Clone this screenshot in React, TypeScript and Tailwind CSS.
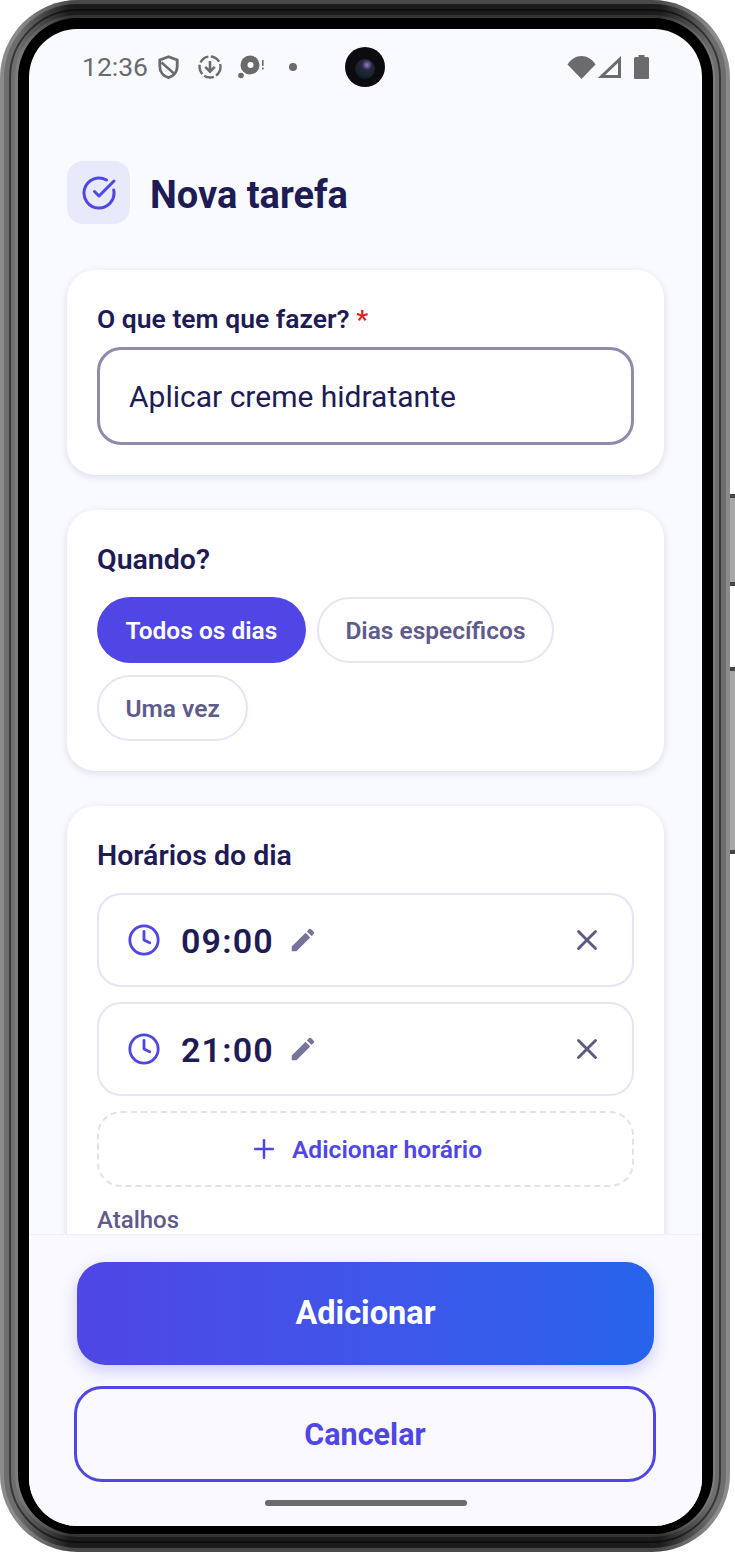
import { CircleCheckBig, Clock, Plus, X } from 'lucide-react';
import { MdEdit } from 'react-icons/md';

function TimeRow({ time }: { time: string }) {
  return (
    <div className="flex items-center h-[94px] rounded-[24px] border-2 border-[#e6e4f5] bg-white pl-[28px] pr-[28px]">
      <Clock size={34} strokeWidth={2} className="text-[#4f46e5] shrink-0" />
      <span className="ml-[20px] pt-[2px] text-[34px] font-semibold tracking-[1.2px] text-[#1e1b55]">{time}</span>
      <MdEdit size={30} className="ml-[14px] text-[#77749a]" />
      <X size={34} strokeWidth={2} className="ml-auto text-[#5d5a80]" />
    </div>
  );
}

function StatusIcons() {
  return (
    <div className="flex items-center text-[#6b6b6e]">
      <span className="text-[26.5px] leading-none">12:36</span>
      <svg width="21" height="25" viewBox="0 0 21 25" fill="none" stroke="currentColor" strokeWidth="2.8" className="ml-[10px]">
        <path d="M10.500 1.800L1.800 5v6.500c0 5.500 3.700 9.700 8.700 11.200 5-1.500 8.700-5.700 8.700-11.200V5z" />
        <path d="M3.500 7.500l12.500 11" strokeWidth="2.400" />
      </svg>
      <svg width="24" height="24" viewBox="0 0 24 24" fill="none" stroke="currentColor" strokeWidth="2.400" className="ml-[19px]">
        <circle cx="12" cy="12" r="10.500" strokeDasharray="10 2.500" />
        <path d="M12 6v10.500M7.200 11.800l4.800 4.800 4.800-4.800" strokeWidth="2.600" />
      </svg>
      <svg width="26" height="24" viewBox="0 0 26 24" className="ml-[16px]">
        <circle cx="12" cy="10" r="9.500" fill="currentColor" />
        <circle cx="12.500" cy="10" r="3" fill="#f8fafe" />
        <circle cx="3" cy="20.500" r="2.800" fill="currentColor" />
        <rect x="24" y="5" width="1.600" height="6" fill="currentColor" />
        <rect x="24" y="12.500" width="1.600" height="2" fill="currentColor" />
      </svg>
      <div className="ml-[25px] w-[8px] h-[8px] rounded-full bg-[#6b6b6e]" />
    </div>
  );
}

function StatusRight() {
  return (
    <div className="flex items-center text-[#6b6b6e]">
      <svg width="29" height="24" viewBox="0 0 29 24" fill="currentColor">
        <path d="M14.500 24L0.500 9.500C4 4 9 1 14.500 1S25 4 28.500 9.500z" />
      </svg>
      <svg width="24" height="24" viewBox="0 0 24 24" fill="none" stroke="currentColor" strokeWidth="3" className="ml-[2px]">
        <path d="M21.500 4.500v17H3.500z" />
      </svg>
      <svg width="15" height="24" viewBox="0 0 15 24" fill="currentColor" className="ml-[12px]">
        <path d="M4.500 0h6v2h3a1.500 1.500 0 0 1 1.500 1.500V23a1 1 0 0 1-1 1H1a1 1 0 0 1-1-1V3.500A1.500 1.500 0 0 1 1.500 2h3z" />
      </svg>
    </div>
  );
}

export default function App() {
  return (
    <div className="relative w-[735px] h-[1553px] bg-white overflow-hidden [font-family:Roboto,sans-serif]">
      {/* Side buttons */}
      <div className="absolute left-[730px] top-[494px] w-[5px] h-[92px] bg-[#a8a8a8] border-y-[4px] border-[#444444]" />
      <div className="absolute left-[730px] top-[667px] w-[5px] h-[187px] bg-[#a8a8a8] border-y-[4px] border-[#444444]" />

      {/* Phone frame */}
      <div className="relative w-[730px] h-[1552px] rounded-[78px] bg-[linear-gradient(90deg,#6e6e6e_0,#6e6e6e_18px,#1c1c1c_70px,#1c1c1c_660px,#6e6e6e_712px,#6e6e6e_100%)] pt-[18px] pl-[18px] pr-[17px] pb-[18px]">
        <div className="absolute inset-0 rounded-[78px] border-[4px] border-white/20" />
        <div className="absolute inset-[9px] rounded-[69px] border-[2px] border-black/50" />
        <div className="absolute inset-[15px] rounded-[63px] border-[3px] border-white/10" />

        <div className="relative w-full h-full rounded-[60px] bg-black pt-[11px] pl-[11px] pr-[11px] pb-[8px]">
          {/* Screen */}
          <div className="relative flex flex-col w-full h-full rounded-[48px] bg-[#f8fafe] overflow-hidden">
            {/* Camera */}
            <div className="absolute left-[316px] top-[18px] w-[40px] h-[40px] rounded-full bg-[#0c0c10] flex items-center justify-center">
              <div className="mt-[4px] w-[20px] h-[20px] rounded-full bg-[radial-gradient(circle_at_60%_30%,#8f80c8_0,#2a2540_28%,#15252c_60%,#0c0c10_100%)]" />
            </div>

            <div className="flex items-center justify-between h-[76px] pl-[53px] pr-[53px] shrink-0">
              <StatusIcons />
              <StatusRight />
            </div>

            {/* Scrollable content */}
            <div className="flex-1 min-h-0 overflow-hidden px-[38px] pt-[56px]">
              <div className="flex items-center gap-[20px] h-[63px]">
                <div className="w-[63px] h-[63px] rounded-[16px] bg-[#e8e9fb] flex items-center justify-center">
                  <CircleCheckBig size={36} strokeWidth={2} className="text-[#4f46e5]" />
                </div>
                <h1 className="pt-[6px] text-[38px] font-bold text-[#1e1b55]">Nova tarefa</h1>
              </div>

              <div className="mt-[46px] h-[205px] rounded-[28px] bg-white shadow-[0_2px_7px_rgba(30,27,75,0.13)] px-[30px] pt-[33px]">
                <div className="text-[26.5px] leading-[32px] font-semibold text-[#1e1b55]">
                  O que tem que fazer? <span className="text-[#dc2626]">*</span>
                </div>
                <div className="mt-[12px] flex items-center h-[98px] rounded-[24px] border-[3px] border-[#8f8bad] bg-white pl-[29px]">
                  <span className="text-[30px] text-[#1e1b55]">Aplicar creme hidratante</span>
                </div>
              </div>

              <div className="mt-[35px] h-[261px] rounded-[28px] bg-white shadow-[0_2px_7px_rgba(30,27,75,0.13)] px-[30px] pt-[34px]">
                <div className="text-[28.5px] leading-[32px] font-semibold text-[#1e1b55]">Quando?</div>
                <div className="mt-[21px] flex flex-wrap gap-x-[11px] gap-y-[12px]">
                  <div className="flex items-center h-[66px] px-[28.5px] pt-[2px] rounded-full bg-[#4f46e5] text-[24.5px] font-semibold text-white">Todos os dias</div>
                  <div className="flex items-center h-[66px] px-[26.5px] pt-[2px] rounded-full border-2 border-[#e6e4f5] text-[24.5px] font-semibold text-[#5f5b8a]">Dias específicos</div>
                  <div className="flex items-center h-[66px] px-[26.5px] pt-[2px] rounded-full border-2 border-[#e6e4f5] text-[24.5px] font-semibold text-[#5f5b8a]">Uma vez</div>
                </div>
              </div>

              <div className="mt-[35px] rounded-[28px] bg-white shadow-[0_2px_7px_rgba(30,27,75,0.13)] px-[30px] pt-[34px] pb-[30px]">
                <div className="text-[28.5px] leading-[32px] font-semibold text-[#1e1b55]">Horários do dia</div>
                <div className="mt-[21px] flex flex-col gap-[15px]">
                  <TimeRow time="09:00" />
                  <TimeRow time="21:00" />
                  <div className="flex items-center justify-center gap-[13px] h-[76px] rounded-[24px] border-2 border-dashed border-[#e2e1ec]">
                    <Plus size={30} strokeWidth={2} className="text-[#4f46e5]" />
                    <span className="pt-[2px] text-[24.6px] font-semibold text-[#4f46e5]">Adicionar horário</span>
                  </div>
                </div>
                <div className="mt-[17px] text-[24px] leading-[32px] font-medium text-[#5f5b8a]">Atalhos</div>
              </div>
            </div>

            {/* Footer actions */}
            <div className="shrink-0 h-[292px] border-t border-[#eeeef6] bg-[#f9f9ff] flex flex-col items-center pt-[27px]">
              <div className="flex items-center justify-center w-[577px] h-[103px] rounded-[28px] bg-gradient-to-r from-[#4f46e5] to-[#2563eb] shadow-[0_6px_16px_rgba(79,70,229,0.25)] text-[32.5px] font-bold text-white">
                Adicionar
              </div>
              <div className="mt-[21px] -ml-[1px] flex items-center justify-center w-[582px] h-[96px] pt-[2px] rounded-[28px] border-[3px] border-[#4f46e5] text-[30.5px] font-bold text-[#4f46e5]">
                Cancelar
              </div>
              <div className="mt-[18px] w-[202px] h-[6px] rounded-full bg-[#6b6b6e]" />
            </div>
          </div>
        </div>
      </div>
    </div>
  );
}
